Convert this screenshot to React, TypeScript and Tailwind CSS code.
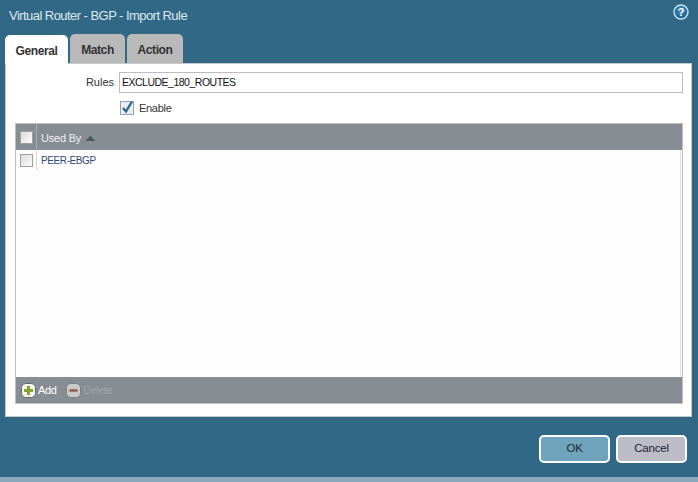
import React from "react";

function Check() {
  return (
    <span className="block w-[13px] h-[13px] border border-[#a0a0a0] bg-gradient-to-br from-[#dcdcdc] to-[#fbfbfb]" />
  );
}

const tab = "h-[29px] rounded-t-[5px] flex items-center justify-center pt-[2px] font-bold text-[12px] tracking-[-0.4px] text-[#333]";

export default function App() {
  return (
    <div className="w-[698px] h-[482px] overflow-hidden flex flex-col bg-[#316886] font-['Liberation_Sans',sans-serif] leading-none text-[#222]">
      <div className="h-[31px] shrink-0 flex items-start justify-between pl-[9px] pr-[9px]">
        <span className="mt-[8px] text-[13px] leading-[15px] text-[#dce9f0] tracking-[-0.55px]">Virtual Router - BGP - Import Rule</span>
        <svg width="16" height="16" viewBox="0 0 16 16" className="mt-[4px]">
          <defs>
            <radialGradient id="helpBall" cx="50%" cy="35%" r="70%">
              <stop offset="0%" stopColor="#3f8fc4" />
              <stop offset="100%" stopColor="#155a8c" />
            </radialGradient>
          </defs>
          <circle cx="8" cy="8" r="7" fill="url(#helpBall)" stroke="#cfe2ee" strokeWidth="1.4" />
          <text x="8" y="12" textAnchor="middle" fontSize="11" fontWeight="700" fill="#fff" fontFamily="Liberation Sans">?</text>
        </svg>
      </div>
      <div className="h-[32px] shrink-0 flex items-end pl-[5px] gap-[2px]">
        <div className={"w-[63px] mb-[-1px] z-10 bg-white " + tab}>General</div>
        <div className={"w-[55px] bg-[#b9b9b9] " + tab}>Match</div>
        <div className={"w-[56px] bg-[#b9b9b9] " + tab}>Action</div>
      </div>
      <div className="ml-[5px] mr-[6px] h-[354px] shrink-0 bg-white border border-[#c4c8cc] flex flex-col pl-[9px] pr-[8px]">
        <div className="flex items-center h-[21px] mt-[8px] shrink-0">
          <span className="w-[104px] text-right pr-[5px] text-[11px] text-[#333]">Rules</span>
          <div className="flex-1 h-[21px] border border-[#bdbdbd] flex items-center pl-[2px] text-[10.5px] tracking-[-0.5px] text-[#111]">EXCLUDE_180_ROUTES</div>
        </div>
        <div className="flex items-center h-[15px] mt-[7px] ml-[105px] shrink-0">
          <svg width="14" height="15" viewBox="0 0 14 15">
            <rect x="0.5" y="1.5" width="13" height="13" fill="#e9eef2" stroke="#9aa3aa" />
            <path d="M3 8 L6 11.5 L12 1.5" fill="none" stroke="#33688a" strokeWidth="2.4" />
          </svg>
          <span className="ml-[5px] pt-[2px] text-[11px] tracking-[-0.3px] text-[#333]">Enable</span>
        </div>
        <div className="mt-[8px] h-[281px] shrink-0 border border-[#bdbfc2] flex flex-col">
          <div className="h-[26px] shrink-0 bg-[#868d93] flex items-center">
            <div className="w-[21px] h-full border-r border-[#a6abb0] flex items-center justify-center">
              <Check />
            </div>
            <span className="ml-[4px] pt-[3px] text-[11px] tracking-[-0.2px] text-[#eef1f3]">Used By</span>
            <svg width="11" height="6" viewBox="0 0 11 6" className="ml-[4px] mt-[1px]">
              <path d="M0.5 6 L5.5 0.5 L10.5 6 Z" fill="#4e5a63" />
            </svg>
          </div>
          <div className="flex-1 bg-[#fdfdfd] flex items-start relative">
            <div className="w-[21px] h-[20px] border-r border-[#d8d8d8] flex items-center justify-center">
              <Check />
            </div>
            <span className="ml-[4px] mt-[6px] text-[10px] tracking-[-0.4px] text-[#2f4a78]">PEER-EBGP</span>
            <div className="absolute right-0 top-0 bottom-0 w-[2px] border-l border-[#e2e2e2]" />
          </div>
          <div className="h-[26px] shrink-0 bg-[#868d93] flex items-center pl-[5px]">
            <svg width="15" height="15" viewBox="0 0 15 15">
              <rect x="0.5" y="0.5" width="14" height="14" rx="4" fill="#f3f3f0" stroke="#5c6870" />
              <path d="M7.5 3 V12 M3 7.5 H12" stroke="#84a52a" strokeWidth="3" />
            </svg>
            <span className="ml-[2px] pt-[1px] text-[11px] tracking-[-0.4px] text-white">Add</span>
            <svg width="15" height="15" viewBox="0 0 15 15" className="ml-[10px]">
              <rect x="0.5" y="0.5" width="14" height="14" rx="4" fill="#c9c9c9" stroke="#777f85" />
              <path d="M3.5 7.5 H11.5" stroke="#8a5a48" strokeWidth="2.4" />
            </svg>
            <span className="ml-[2px] pt-[1px] text-[11px] tracking-[-0.5px] text-[#9fa4a8]">Delete</span>
          </div>
        </div>
      </div>
      <div className="flex-1 flex justify-end pr-[11px] pt-[18px] gap-[6px]">
        <div className="w-[71px] h-[28px] bg-[#6ea3bb] border-2 border-white rounded-[5px] flex items-center justify-center text-[11.5px] tracking-[-0.2px] text-[#1c2b36]">OK</div>
        <div className="w-[71px] h-[28px] bg-[#bcbdc6] border-2 border-white rounded-[5px] flex items-center justify-center text-[11.5px] tracking-[-0.2px] text-[#1c2430]">Cancel</div>
      </div>
      <div className="h-[5px] shrink-0 bg-[#8aa8bc]" />
    </div>
  );
}
